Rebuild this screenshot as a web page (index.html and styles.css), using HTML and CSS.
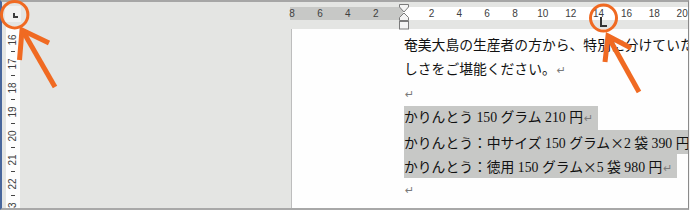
FILE: index.html
```html
<!DOCTYPE html>
<html lang="ja">
<head>
<meta charset="utf-8">
<title>ruler</title>
<link rel="stylesheet" href="styles.css">
</head>
<body>
<div class="screen">
  <div class="app">
    <div class="vcol">
      <div class="tabsel"><span class="tabL"></span></div>
      <div class="vruler">
        <div class="vcell"><span>16</span></div>
        <div class="vcell"><span>17</span></div>
        <div class="vcell"><span>18</span></div>
        <div class="vcell"><span>19</span></div>
        <div class="vcell"><span>20</span></div>
        <div class="vcell"><span>21</span></div>
        <div class="vcell"><span>22</span></div>
        <div class="vcell"><span>23</span></div>
      </div>
    </div>
    <div class="rcol">
      <div class="hbar">
        <div class="hruler">
          <div class="htrack">
            <span>8</span><span>6</span><span>4</span><span>2</span><span></span><span>2</span><span>4</span><span>6</span><span>8</span><span>10</span><span>12</span><span>14</span><span>16</span><span>18</span><span>20</span>
          </div>
        </div>
        <svg class="indent" width="12" height="26" viewBox="0 0 12 26">
          <g fill="#f4f4f4" stroke="#7b7b7b" stroke-width="1">
            <polygon points="1.5,0.5 10.5,0.5 10.5,3 6,8 1.5,3"/>
            <polygon points="6,9 10.5,13.5 10.5,16.5 1.5,16.5 1.5,13.5"/>
            <rect x="1.5" y="17.5" width="9" height="7.5"/>
          </g>
        </svg>
        <span class="tabstop"></span>
      </div>
      <div class="page">
        <div class="ln">奄美大島の生産者の方から、特別に分けていただいたかりんとうです。</div>
        <div class="ln">しさをご堪能ください。<span class="pm">↵</span></div>
        <div class="ln"><span class="pm">↵</span></div>
        <div class="ln"><span class="hl">かりんとう 150 グラム 210 円<span class="pm">↵</span></span></div>
        <div class="ln"><span class="hl">かりんとう：中サイズ 150 グラム<span class="cj">×</span>2 袋 390 円<span class="pm">↵</span></span></div>
        <div class="ln"><span class="hl">かりんとう：徳用 150 グラム<span class="cj">×</span>5 袋 980 円<span class="pm">↵</span></span></div>
        <div class="ln"><span class="pm">↵</span></div>
      </div>
    </div>
  </div>
  <svg class="annot" width="690" height="210" viewBox="0 0 690 210">
    <g fill="none" stroke="#f06a22" stroke-width="3">
      <circle cx="14.7" cy="14.7" r="13.2"/>
      <circle cx="603.5" cy="18" r="13"/>
    </g>
    <g fill="none" stroke="#f06a22" stroke-width="5" stroke-linejoin="miter" stroke-linecap="butt">
      <path d="M55 87 L24 33"/>
      <path d="M49 43 L22 30 L19.5 60"/>
      <path d="M639 92 L610 40"/>
      <path d="M631 48 L608 36 L605 62"/>
    </g>
  </svg>
</div>
</body>
</html>
```

FILE: styles.css
```css
* { box-sizing: border-box; }

body {
  margin: 0;
  background: #f3f3f3;
}

.screen {
  position: relative;
  width: 690px;
  height: 210px;
  overflow: hidden;
}

.app {
  width: 689px;
  height: 210px;
  display: flex;
  background: #e4e5e3;
  border-top: 2px solid #a6a6a6;
  border-left: 2px solid #48669c;
  border-right: 1px solid #8a8a8a;
  border-bottom: 2px solid #a8a8a8;
}

/* left column: tab selector + vertical ruler */
.vcol {
  width: 18px;
  display: flex;
  flex-direction: column;
}

.tabsel {
  margin: 4px 0 0 3px;
  width: 16px;
  height: 16px;
  background: #f1f1f0;
}

.tabL {
  display: block;
  width: 5px;
  height: 5px;
  margin: 7px 0 0 8px;
  border-left: 2px solid #3c3c3c;
  border-bottom: 2px solid #3c3c3c;
}

.vruler {
  margin: 4px 0 0 4px;
  width: 14px;
  flex: 1;
  background: #fdfdfd;
  overflow: hidden;
  padding-top: 2px;
}

.vcell {
  height: 24px;
  display: flex;
  align-items: center;
  justify-content: center;
  background: linear-gradient(#444, #444) no-repeat 50% 100% / 4px 1px;
}

.vcell span {
  display: inline-block;
  transform: rotate(-90deg);
  font-family: "Liberation Sans", Arial, sans-serif;
  font-size: 10px;
  line-height: 10px;
  color: #404040;
}

/* right column: horizontal ruler + page */
.rcol {
  flex: 1;
  min-width: 0;
  display: flex;
  flex-direction: column;
  overflow: hidden;
}

.hbar {
  position: relative;
  height: 27px;
  padding-top: 5px;
  flex: none;
}

.hruler {
  margin-left: 270px;
  height: 13px;
  background: linear-gradient(to right, #c7c8c6 0, #c7c8c6 113px, #ffffff 113px);
}

.htrack {
  display: flex;
  margin-left: -11.8px;
}

.htrack span {
  flex: 0 0 27.86px;
  text-align: center;
  font-family: "Liberation Sans", Arial, sans-serif;
  font-size: 10px;
  line-height: 13px;
  color: #404040;
}

.indent {
  position: absolute;
  left: 378px;
  top: 2px;
  display: block;
}

.tabstop {
  position: absolute;
  left: 580px;
  top: 15px;
  width: 7px;
  height: 10px;
  border-left: 2px solid #333;
  border-bottom: 2px solid #333;
}

.page {
  margin-left: 271px;
  flex: 1;
  background: #fefefe;
  border-left: 1px solid #bdbdbd;
  padding: 5px 0 0 112px;
  overflow: hidden;
}

.ln {
  height: 24px;
  line-height: 24px;
  white-space: nowrap;
  font-family: "Liberation Serif", "Noto Sans CJK JP", serif;
  font-size: 13.8px;
  color: #111;
}

.hl {
  display: inline-block;
  vertical-align: top;
  height: 24px;
  background: #c7c8c6;
}

.cj {
  display: inline-block;
  width: 1em;
  text-align: center;
  font-family: "Noto Sans CJK JP", sans-serif;
}

.pm {
  display: inline-block;
  width: 15px;
  padding-left: 1px;
  font-family: "DejaVu Sans", sans-serif;
  font-size: 11px;
  color: #7a7a7a;
}

.annot {
  position: absolute;
  left: 0;
  top: 0;
  display: block;
}
```
